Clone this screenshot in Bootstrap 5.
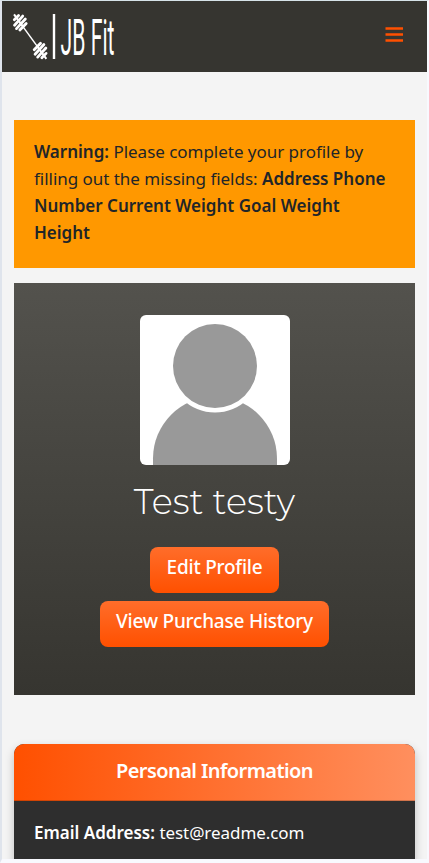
<!DOCTYPE html>
<html lang="en">
<head>
<meta charset="utf-8">
<meta name="viewport" content="width=device-width, initial-scale=1">
<title>JB Fit – Profile</title>
<link href="https://cdn.jsdelivr.net/npm/bootstrap@5.3.0/dist/css/bootstrap.min.css" rel="stylesheet">
<style>
html { overflow: hidden; }
body { font-family: "Noto Sans", "Open Sans", sans-serif; font-size: 17px; line-height: 27px; background: #f8f9fe; color: #212529; }
.app-frame { height: 863px; overflow: hidden; border: solid #f8f9fe; border-width: 1px 2px 4px 2px; border-top-color: #d7e3e8; border-left-color: #dfe4ec; background: #f4f4f4; }
.site-nav { height: 71px; background: #363530; }
.site-nav svg { overflow: visible; }
.menu-btn { margin-bottom: 4px; }
.profile-alert { height: 148px; background: #ff9800; margin-top: 48px; padding: 18px 20px; font-weight: 400; }
.profile-alert strong { font-weight: 600; }
.profile-alert span { letter-spacing: -.03px; }
.profile-hero { height: 412px; margin-top: 15px; padding-top: 32px; background: linear-gradient(#53524d, #363530); }
.avatar-pic { width: 150px; height: 150px; border-radius: 6px; }
.hero-name { font-family: Montserrat, "Noto Sans", sans-serif; font-weight: 300; font-size: 35.2px; line-height: 44px; margin: 15px 0 23px; }
.btn-fit { --bs-btn-color: #fff; --bs-btn-hover-color: #fff; height: 46px; border: 0; border-radius: 8px; padding: 6px 15px 12px; font-size: 19px; line-height: 28px; font-weight: 500; letter-spacing: -.22px; white-space: nowrap; background: linear-gradient(#ff6d2a, #ff5000); }
.btn-edit { width: 129px; }
.btn-history { width: 229px; }
.info-card { height: 180px; margin-top: 49px; border: 0; border-radius: 10px; background: #2e2e2e; box-shadow: 0 4px 10px rgba(0,0,0,.22); color: #fff; overflow: hidden; }
.info-head { height: 57px; padding: 13px 0; border-bottom: 1px solid rgba(0,0,0,.18); background: linear-gradient(90deg, #ff5000, #ff8f5e); font-size: 20px; line-height: 28px; font-weight: 650; letter-spacing: -.58px; }
.info-body { padding: 18px 20px; }
.info-body strong { font-weight: 600; }
.info-body span { letter-spacing: -.06px; }
</style>
</head>
<body>
<div class="app-frame">
  <nav class="site-nav d-flex align-items-center justify-content-between px-2">
    <a href="#" class="ms-1" aria-label="JB Fit">
      <svg class="d-block" width="140" height="51" viewBox="14 11 140 51">
        <g transform="translate(30.2 36.6) rotate(54)" stroke="#fff" fill="none">
          <path d="M-27.5 0H-12M12 0H27.5" stroke-width="2"/>
          <path d="M-13 0H13" stroke-width="1.5"/>
          <path d="M-23.9 -3L-22.9 3M-21 -6L-18.4 6M-17.1 -6.4L-14.5 6.4M-13 -4.5L-11.4 4.5M11.4 -4.5L13 4.5M14.5 -6.4L17.1 6.4M18.4 -6L21 6M22.9 -3L23.9 3" stroke-width="2.8" stroke-linecap="round"/>
        </g>
        <path d="M54 14V59" stroke="#fff" stroke-width="2.4"/>
        <text x="60.5" y="54.5" textLength="54" lengthAdjust="spacingAndGlyphs" font-family="Roboto, sans-serif" font-weight="400" font-size="50" fill="#fff">JB Fit</text>
      </svg>
    </a>
    <button class="btn border-0 p-0 me-3 menu-btn" aria-label="Menu">
      <svg class="d-block" width="18" height="18" viewBox="0 0 18 18"><path d="M.5 2.5h17.5M.5 8.5h17.5M.5 14.5h17.5" stroke="#ff5000" stroke-width="2.6"/></svg>
    </button>
  </nav>
  <main class="container-fluid">
    <div class="profile-alert text-nowrap">
      <strong>Warning:</strong> <span>Please complete your profile by</span><br>
      <span>filling out the missing fields:</span> <strong>Address Phone</strong><br>
      <strong>Number Current Weight Goal Weight</strong><br>
      <strong>Height</strong>
    </div>
    <section class="profile-hero d-flex flex-column align-items-center text-white">
      <svg class="avatar-pic" viewBox="0 0 150 150">
        <rect width="150" height="150" fill="#fff"/>
        <path d="M13 150V143.5A62 62 0 0 1 137 143.5V150Z" fill="#999"/>
        <circle cx="75" cy="51" r="46.5" fill="#fff"/>
        <circle cx="75" cy="51" r="42" fill="#999"/>
      </svg>
      <h1 class="hero-name">Test testy</h1>
      <a href="#" class="btn btn-fit btn-edit mb-2">Edit Profile</a>
      <a href="#" class="btn btn-fit btn-history">View Purchase History</a>
    </section>
    <section class="card info-card">
      <div class="info-head text-center">Personal Information</div>
      <div class="info-body"><strong>Email Address:</strong> <span>test@readme.com</span></div>
    </section>
  </main>
</div>
<script src="https://cdn.jsdelivr.net/npm/bootstrap@5.3.0/dist/js/bootstrap.bundle.min.js"></script>
</body>
</html>
